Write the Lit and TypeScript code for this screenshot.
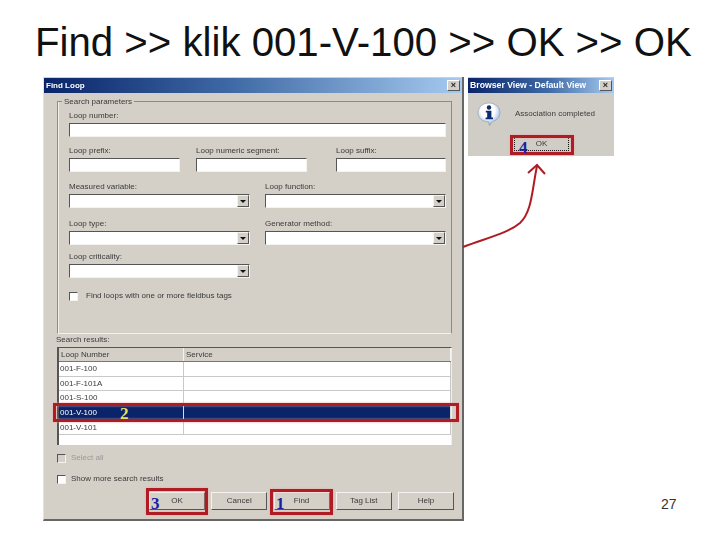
import { LitElement, html, css } from "lit";
import { customElement } from "lit/decorators.js";

@customElement("app-root")
export class AppRoot extends LitElement {
  static styles = css`
    :host { display: block; position: relative; width: 720px; height: 540px; background: #fff; overflow: hidden; font-family: "Liberation Sans", Arial, sans-serif; }
    .title { height: 77px; box-sizing: border-box; padding-left: 35px; padding-top: 20px; font-size: 40.2px; line-height: 46px; color: #111; white-space: nowrap; }
    .row { display: flex; align-items: flex-start; padding-left: 43px; }
    .dialog { width: 421px; height: 444px; box-sizing: border-box; background: #d4d0c8; border-right: 2px solid #666; border-bottom: 2px solid #666; border-left: 1px solid #e4e2dc; color: #3a3a3a; font-size: 8px; display: flex; flex-direction: column; }
    .soft { filter: blur(0.35px); }
    .titlebar { flex: none; height: 15px; margin-top: 1px; background: linear-gradient(90deg, #0a246a, #3f6aa5 45%, #a6caf0); color: #fff; font-weight: bold; font-size: 8px; line-height: 15px; padding: 0 2px; display: flex; justify-content: space-between; align-items: center; }
    .x { width: 13px; height: 11px; box-sizing: border-box; background: #d4d0c8; color: #222; border: 1px solid; border-color: #fff #555 #555 #fff; font: bold 9px/9px "Liberation Sans", sans-serif; text-align: center; }
    .group { position: relative; flex: none; margin: 8px 10px 0 13px; height: 233px; box-sizing: border-box; border: 1px solid #8d8b85; border-bottom-color: #f2f1ec; box-shadow: inset 1px 0 0 #f2f1ec; padding: 7px 5px 0 11px; display: grid; grid-template-rows: 35px 36px 37px 33px 41px auto; }
    .legend { position: absolute; left: 4px; top: -6px; background: #d4d0c8; padding: 0 2px; line-height: 11px; }
    .cols3 { display: grid; grid-template-columns: 127px 140px 110px; }
    .cols3 > div:nth-child(1) { margin-right: 16px; }
    .cols3 > div:nth-child(2) { margin-right: 29px; }
    .cols2 { display: grid; grid-template-columns: 181px 181px; column-gap: 15px; }
    .lab { line-height: 13px; height: 13px; margin-bottom: 1px; white-space: nowrap; }
    .input { height: 14px; box-sizing: border-box; background: #fff; border: 1.5px solid; border-color: #555 #f4f3ef #f4f3ef #555; position: relative; display: flex; justify-content: flex-end; }
    .drop { width: 12px; height: 12px; margin: 0; box-sizing: border-box; background: #d4d0c8; border: 1px solid; border-color: #f4f3ef #555 #555 #f4f3ef; display: flex; align-items: center; justify-content: center; }
    .tri { width: 0; height: 0; border-left: 3px solid transparent; border-right: 3px solid transparent; border-top: 3px solid #111; }
    .check-row { display: flex; align-items: center; gap: 5px; line-height: 10px; }
    .group .check-row { gap: 8px; align-self: start; }
    .box { width: 9px; height: 9px; box-sizing: border-box; background: #fff; border: 1.5px solid; border-color: #555 #f4f3ef #f4f3ef #555; flex: none; }
    .box.off { background: #d4d0c8; }
    .results { margin: -1px 0 1px 12px; line-height: 13px; height: 13px; }
    .table { margin-left: 13px; width: 395px; height: 98px; box-sizing: border-box; background: #fff; border-left: 2px solid #555; border-top: 1px solid #555; border-right: 1px solid #eee; display: flex; flex-direction: column; }
    .tr { display: grid; grid-template-columns: 125px 1fr; height: 14.5px; line-height: 14px; box-sizing: border-box; border-bottom: 1px solid #c8c8c4; }
    .tr > div { padding-left: 1px; border-right: 1px solid #c8c8c4; white-space: nowrap; overflow: hidden; }
    .tr.head { height: 14px; background: #d4d0c8; border-bottom: 1px solid #777; }
    .tr.head > div { border-right: 1px solid #f4f3ef; padding-left: 2px; }
    .tr.sel { background: #0a246a; color: #fff; border-bottom-color: #0a246a; height: 15px; }
    .tr.sel > div { border-right-color: #dcdcdc; }
    .opts { margin: 8px 0 0 13px; display: flex; flex-direction: column; gap: 11px; }
    .off-txt { color: #999; }
    .buttons { display: grid; grid-template-columns: repeat(5, 56px); column-gap: 6.25px; justify-content: end; margin: 8px 8px 0 0; }
    .btn { height: 18px; box-sizing: border-box; border: 1px solid; border-color: #f4f3ef #555 #555 #f4f3ef; text-align: center; line-height: 16px; }
    .side { display: flex; flex-direction: column; margin-left: 4px; }
    .popup { width: 146px; height: 79px; background: #d0cdc6; color: #3a3a3a; font-size: 8px; display: flex; flex-direction: column; }
    .popup .titlebar { margin-top: 1px; background: linear-gradient(90deg, #0a246a, #3f6aa5 55%, #a6caf0); font-size: 8.7px; }
    .msg { display: flex; align-items: center; gap: 14px; padding-left: 9px; height: 41px; box-sizing: border-box; }
    .ok { align-self: center; margin: 3px 0 0 1px; width: 55px; height: 14px; box-sizing: border-box; border: 1px dotted #111; text-align: center; line-height: 12px; }
    .num { position: absolute; left: 661px; top: 496px; font-size: 14px; line-height: 16px; color: #333; }
    .mark { position: absolute; box-sizing: border-box; border: 3px solid #b01c24; box-shadow: 0 0 2px #f0a0a0, inset 0 0 2px #f0a0a0; }
    .n { position: absolute; font: bold 17px/17px "Liberation Serif", serif; color: #1a1ea0; }
    .n.y { color: #e8e060; }
    svg.arrow { position: absolute; left: 460px; top: 160px; }
  `;

  private field(label: string, drop = false) {
    return html`<div><div class="lab">${label}</div><div class="input">${drop ? html`<div class="drop"><div class="tri"></div></div>` : ""}</div></div>`;
  }

  render() {
    const rows = ["001-F-100", "001-F-101A", "001-S-100", "001-V-100", "001-V-101"];
    return html`
      <div class="title">Find &gt;&gt; klik 001-V-100 &gt;&gt; OK &gt;&gt; OK</div>
      <div class="row">
        <div class="dialog soft">
          <div class="titlebar"><span>Find Loop</span><span class="x">×</span></div>
          <div class="group">
            <div class="legend">Search parameters</div>
            ${this.field("Loop number:")}
            <div class="cols3">${this.field("Loop prefix:")}${this.field("Loop numeric segment:")}${this.field("Loop suffix:")}</div>
            <div class="cols2">${this.field("Measured variable:", true)}${this.field("Loop function:", true)}</div>
            <div class="cols2">${this.field("Loop type:", true)}${this.field("Generator method:", true)}</div>
            <div class="cols2">${this.field("Loop criticality:", true)}</div>
            <div class="check-row"><div class="box"></div><span>Find loops with one or more fieldbus tags</span></div>
          </div>
          <div class="results">Search results:</div>
          <div class="table">
            <div class="tr head"><div>Loop Number</div><div>Service</div></div>
            ${rows.map((r) => html`<div class="tr ${r === "001-V-100" ? "sel" : ""}"><div>${r}</div><div></div></div>`)}
          </div>
          <div class="opts">
            <div class="check-row off-txt"><div class="box off"></div><span>Select all</span></div>
            <div class="check-row"><div class="box"></div><span>Show more search results</span></div>
          </div>
          <div class="buttons">
            ${["OK", "Cancel", "Find", "Tag List", "Help"].map((b) => html`<div class="btn">${b}</div>`)}
          </div>
        </div>
        <div class="side">
          <div class="popup soft">
            <div class="titlebar"><span>Browser View - Default View</span><span class="x">×</span></div>
            <div class="msg">
              <svg width="24" height="24" viewBox="0 0 24 24">
                <defs>
                  <radialGradient id="bub" cx="0.45" cy="0.35" r="0.7">
                    <stop offset="0.45" stop-color="#ffffff"/>
                    <stop offset="0.8" stop-color="#a9c4ec"/>
                    <stop offset="1" stop-color="#4f78c0"/>
                  </radialGradient>
                </defs>
                <path d="M12 1C18 1 23 5 23 10.5C23 15.5 19.5 18.6 15.5 19.4L12.5 23.5L11.5 19.8C5.5 19.8 1 16 1 10.5C1 5 6 1 12 1Z" fill="url(#bub)" stroke="#8c98a8" stroke-width="0.6"/>
                <circle cx="12" cy="5.5" r="2.2" fill="#0c2a70"/>
                <path d="M8.8 8.7H14.4V15.4H16V17.2H8.6V15.4H10.2V10.5H8.8Z" fill="#0c2a70"/>
              </svg>
              <span>Association completed</span>
            </div>
            <div class="ok">OK</div>
          </div>
        </div>
      </div>
      <div class="num">27</div>

      <svg class="arrow" width="100" height="100" viewBox="460 160 100 100" fill="none" stroke="#b01c24" stroke-width="2">
        <path d="M463 247C490 237 508 233 520 223C532 212 532 190 537 166"/>
        <path d="M528 173L537 165L545 174"/>
      </svg>
      <div class="mark" style="left:146px;top:488px;width:62px;height:27px"></div>
      <div class="mark" style="left:270px;top:489px;width:63px;height:26px"></div>
      <div class="mark" style="left:53px;top:403px;width:406px;height:19px"></div>
      <div class="mark" style="left:510px;top:135px;width:64px;height:20px"></div>
      <span class="n" style="left:151px;top:495px">3</span>
      <span class="n" style="left:276px;top:495px">1</span>
      <span class="n y" style="left:120px;top:405px">2</span>
      <span class="n" style="left:519px;top:139px">4</span>
    `;
  }
}
